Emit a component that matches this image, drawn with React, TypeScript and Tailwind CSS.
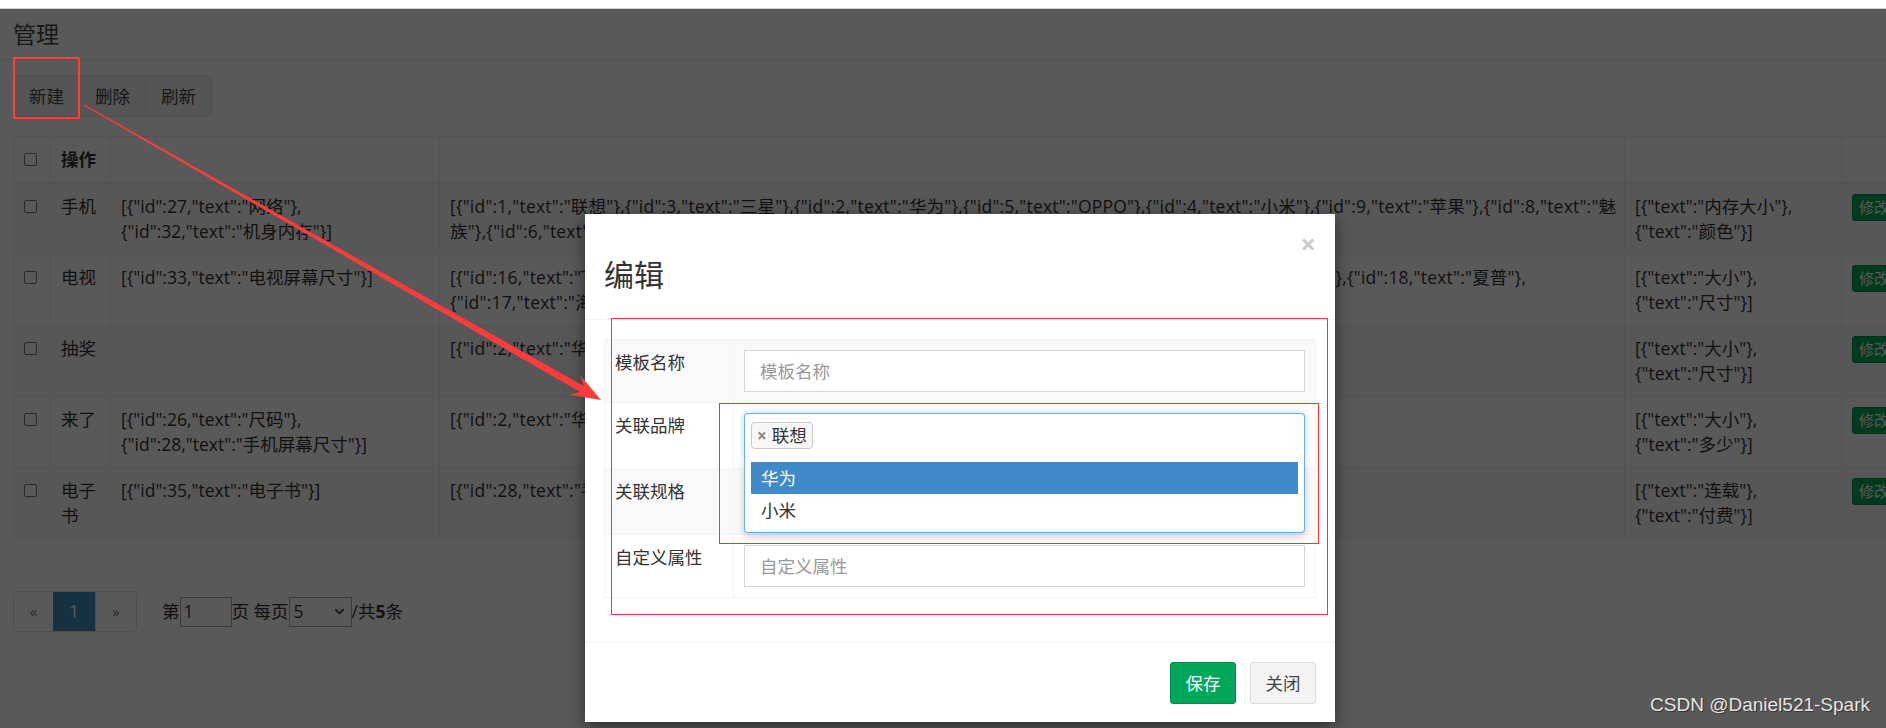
import { ChevronDown } from 'lucide-react';

function Check() {
  return <span className="inline-block w-[13px] h-[13px] rounded-[2px] border border-[#767676] bg-white" />;
}

type Row = { name: string[]; spec: string[]; brand: string[]; attr: string[] };

const rows: Row[] = [
  {
    name: ['手机'],
    spec: ['[{"id":27,"text":"网络"},', '{"id":32,"text":"机身内存"}]'],
    brand: [
      '[{"id":1,"text":"联想"},{"id":3,"text":"三星"},{"id":2,"text":"华为"},{"id":5,"text":"OPPO"},{"id":4,"text":"小米"},{"id":9,"text":"苹果"},{"id":8,"text":"魅',
      '族"},{"id":6,"text":"vivo"}]',
    ],
    attr: ['[{"text":"内存大小"},', '{"text":"颜色"}]'],
  },
  {
    name: ['电视'],
    spec: ['[{"id":33,"text":"电视屏幕尺寸"}]'],
    brand: [
      '[{"id":16,"text":"TCL"},{"id":19,"text":"创维"},{"id":20,"text":"长虹"},{"id":21,"text":"康佳"},{"id":22,"text":"索尼"},{"id":18,"text":"夏普"},',
      '{"id":17,"text":"海信"}]',
    ],
    attr: ['[{"text":"大小"},', '{"text":"尺寸"}]'],
  },
  {
    name: ['抽奖'],
    spec: [],
    brand: ['[{"id":2,"text":"华为"}]'],
    attr: ['[{"text":"大小"},', '{"text":"尺寸"}]'],
  },
  {
    name: ['来了'],
    spec: ['[{"id":26,"text":"尺码"},', '{"id":28,"text":"手机屏幕尺寸"}]'],
    brand: ['[{"id":2,"text":"华为"}]'],
    attr: ['[{"text":"大小"},', '{"text":"多少"}]'],
  },
  {
    name: ['电子', '书'],
    spec: ['[{"id":35,"text":"电子书"}]'],
    brand: ['[{"id":28,"text":"手写笔"}]'],
    attr: ['[{"text":"连载"},', '{"text":"付费"}]'],
  },
];

function Lines({ lines, wide }: { lines: string[]; wide?: boolean }) {
  return (
    <div className={wide ? 'tracking-[0.2px]' : 'overflow-hidden'}>
      {lines.map((l, i) => (
        <div key={i} className="whitespace-nowrap">
          {l}
        </div>
      ))}
    </div>
  );
}

export default function App() {
  const td = 'border border-[#eee] p-[10px] align-top';
  return (
    <div className="relative w-[1886px] h-[728px] overflow-hidden bg-white font-['Open_Sans','Noto_Sans_CJK_SC',sans-serif] text-[#333] text-[17.5px] leading-[25px]">
      <div className="h-[9px] border-b border-[#cfcfcf] bg-white" />

      {/* page */}
      <div>
        <div className="h-[51px] flex items-center px-[13px] border-b border-[#eee]">
          <h3 className="text-[23px] leading-none text-[#444]">管理</h3>
        </div>
        <div className="pl-[13px] pt-[15px]">
          <div className="flex">
            {['新建', '删除', '刷新'].map((t, i) => (
              <button
                key={t}
                className={`h-[42px] w-[67px] border border-[#ddd] bg-[#f4f4f4] text-[#444] text-[17.5px] ${i === 0 ? 'rounded-l-[3px]' : '-ml-px'} ${i === 2 ? 'rounded-r-[3px]' : ''}`}
              >
                {t}
              </button>
            ))}
          </div>

          <table className="mt-[19px] border-collapse table-fixed w-[1917px]">
            <colgroup>
              <col className="w-[37px]" />
              <col className="w-[60px]" />
              <col className="w-[329px]" />
              <col className="w-[1185px]" />
              <col className="w-[217px]" />
              <col className="w-[89px]" />
            </colgroup>
            <thead>
              <tr>
                <th className="border border-[#eee] border-b-2 p-[10px] align-middle text-left">
                  <div className="h-[25px] flex items-center">
                    <Check />
                  </div>
                </th>
                <th className="border border-[#eee] border-b-2 p-[10px] text-left font-bold">操作</th>
                <th className="border border-[#eee] border-b-2 p-[10px]" />
                <th className="border border-[#eee] border-b-2 p-[10px]" />
                <th className="border border-[#eee] border-b-2 p-[10px]" />
                <th className="border border-[#eee] border-b-2 p-[10px]" />
              </tr>
            </thead>
            <tbody>
              {rows.map((r, i) => (
                <tr key={i} className={i % 2 === 0 ? 'bg-[#f9f9f9]' : ''}>
                  <td className={td}>
                    <div className="h-[25px] flex items-center">
                      <Check />
                    </div>
                  </td>
                  <td className={td}>
                    {r.name.map((n) => (
                      <div key={n}>{n}</div>
                    ))}
                  </td>
                  <td className={td}>
                    <Lines lines={r.spec} />
                  </td>
                  <td className={td}>
                    <Lines lines={r.brand} wide />
                  </td>
                  <td className={td}>
                    <Lines lines={r.attr} />
                  </td>
                  <td className={td}>
                    <span className="inline-flex h-[27px] items-center px-[6px] rounded-[3px] bg-[#00a65a] border border-[#008d4c] text-white text-[15px]">
                      修改
                    </span>
                  </td>
                </tr>
              ))}
            </tbody>
          </table>

          <div className="flex items-center mt-[52px]">
            <div className="flex h-[41px] rounded-[4px] border border-[#ddd] overflow-hidden bg-white">
              <span className="w-[39px] flex items-center justify-center text-[#777] text-[15px]">«</span>
              <span className="w-[42px] flex items-center justify-center bg-[#3c8dbc] text-white">1</span>
              <span className="w-[41px] flex items-center justify-center text-[#777] text-[15px] border-l border-[#ddd]">»</span>
            </div>
            <span className="ml-[25px]">第</span>
            <span className="w-[52px] h-[30px] border border-[#a9a9a9] flex items-center pl-[3px]">1</span>
            <span>页 每页</span>
            <span className="w-[63px] h-[30px] border border-[#a9a9a9] flex items-center justify-between pl-[4px] pr-[4px]">
              5
              <ChevronDown size={15} strokeWidth={2.5} />
            </span>
            <span>
              /共<b>5</b>条
            </span>
          </div>
        </div>
      </div>

      {/* backdrop */}
      <div className="absolute left-0 right-0 top-[9px] bottom-0 bg-black/65" />

      {/* modal */}
      <div className="absolute left-[585px] top-[214px] w-[750px] h-[508px] bg-white flex flex-col shadow-[0_5px_15px_rgba(0,0,0,0.5)]">
        <div className="flex items-start px-[19px] pt-[19px] pb-[28px] border-b border-[#f4f4f4]">
          <h3 className="flex-1 mt-[25px] text-[30px] leading-[33px] text-[#333]">编辑</h3>
          <button className="-mt-[3px] text-[27px] leading-none font-bold text-[#cacaca]">×</button>
        </div>

        <div className="p-[19px]">
          <table className="w-[712px] border-collapse table-fixed mb-[25px]">
            <colgroup>
              <col className="w-[129px]" />
              <col />
            </colgroup>
            <tbody>
              <tr className="bg-[#f9f9f9]">
                <td className="border border-[#f4f4f4] p-[10px] align-top">模板名称</td>
                <td className="border border-[#f4f4f4] p-[10px] align-top">
                  <div className="h-[42px] border border-[#d2d6de] bg-white flex items-center px-[15px] text-[#999]">
                    模板名称
                  </div>
                </td>
              </tr>
              <tr>
                <td className="border border-[#f4f4f4] p-[10px] align-top">关联品牌</td>
                <td className="border border-[#f4f4f4] p-[10px] align-top">
                  <div className="relative">
                    <div className="h-[45px] border border-[#66afe9] border-b-0 rounded-t-[4px] bg-white flex items-start pt-[8px] px-[6px] shadow-[0_0_6px_rgba(102,175,233,0.5)]">
                      <span className="h-[27px] flex items-center gap-[5px] pl-[5px] pr-[5px] border border-[#c8c8c8] rounded-[4px] bg-[#f7f7f7] text-[#333]">
                        <span className="text-[#888] font-bold text-[17px] leading-none">×</span>
                        联想
                      </span>
                    </div>
                    <div className="absolute left-0 right-0 top-full z-10 h-[75px] border border-[#66afe9] border-t-0 rounded-b-[4px] bg-white pt-[4px] px-[6px] shadow-[0_4px_8px_rgba(0,0,0,0.18)]">
                      <div className="h-[32px] flex items-center px-[10px] bg-[#3f8bca] text-white">华为</div>
                      <div className="h-[32px] flex items-center px-[10px] text-[#333]">小米</div>
                    </div>
                  </div>
                </td>
              </tr>
              <tr className="bg-[#f9f9f9]">
                <td className="border border-[#f4f4f4] p-[10px] align-top">关联规格</td>
                <td className="border border-[#f4f4f4] p-[10px] align-top">
                  <div className="h-[45px] border border-[#d2d6de] bg-white" />
                </td>
              </tr>
              <tr>
                <td className="border border-[#f4f4f4] p-[10px] align-top">自定义属性</td>
                <td className="border border-[#f4f4f4] p-[10px] align-top">
                  <div className="h-[42px] border border-[#d2d6de] bg-white flex items-center px-[15px] text-[#999]">
                    自定义属性
                  </div>
                </td>
              </tr>
            </tbody>
          </table>
        </div>

        <div className="mt-auto border-t border-[#f4f4f4] p-[19px] flex justify-end gap-[14px]">
          <button className="h-[42px] w-[66px] rounded-[3px] bg-[#00a65a] border border-[#008d4c] text-white text-[17.5px]">
            保存
          </button>
          <button className="h-[42px] w-[66px] rounded-[3px] bg-[#f4f4f4] border border-[#ddd] text-[#444] text-[17.5px]">
            关闭
          </button>
        </div>
      </div>

      {/* annotations */}
      <div className="absolute left-[13px] top-[57px] w-[67px] h-[62px] border-2 border-[#ff3b3b]" />
      <div className="absolute left-[611px] top-[318px] w-[717px] h-[297px] border border-[#ff3333]" />
      <div className="absolute left-[719px] top-[403px] w-[600px] h-[141px] border border-[#ff3333]" />
      <svg className="absolute left-0 top-0" width="1886" height="728" viewBox="0 0 1886 728">
        <polygon
          points="83.75,105.43 580.2,392.1 569.4,394.7 601,400 580.4,375.6 583.6,386.1 84.25,104.57"
          fill="#ff3b3b"
        />
      </svg>

      <div className="absolute right-[16px] bottom-[12px] font-['Liberation_Sans',sans-serif] text-[19px] leading-[22px] text-[#e4e4e4] [text-shadow:1px_1px_1px_rgba(0,0,0,0.45)]">
        CSDN @Daniel521-Spark
      </div>
    </div>
  );
}
